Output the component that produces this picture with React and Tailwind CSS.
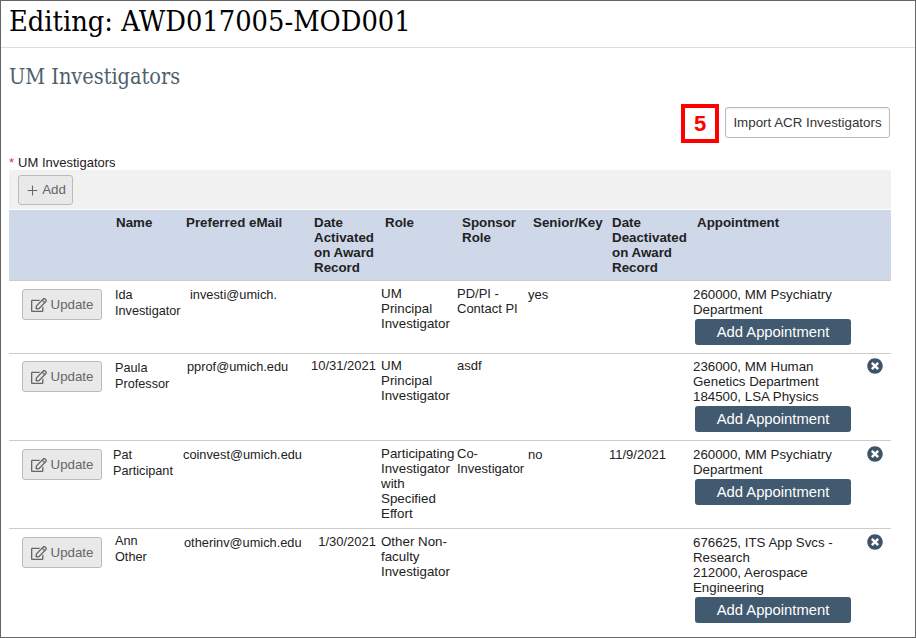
import React from "react";
import { FaRegEdit, FaTimesCircle } from "react-icons/fa";
import { Plus } from "lucide-react";

const cols = "grid grid-cols-[104px_70px_127px_71px_76px_71px_81px_84px_169px_29px]";

const rows = [
  {
    name: ["Ida", "Investigator"],
    nameClass: "pl-[2px] pt-[6px]",
    email: "investi@umich.",
    emailClass: "pl-[7px] pt-[6px]",
    role: ["UM", "Principal", "Investigator"],
    sponsor: ["PD/PI -", "Contact PI"],
    senior: "yes",
    appts: ["260000, MM Psychiatry", "Department"],
    height: "h-[73px]",
    btnTop: "pt-[8px]",
    textTop: "pt-[5px]",
    apptTop: "pt-[6px]",
    noRemove: true,
  },
  {
    name: ["Paula", "Professor"],
    nameClass: "pl-[2px] pt-[6px]",
    email: "pprof@umich.edu",
    emailClass: "pl-[4px] pt-[5px]",
    activated: "10/31/2021",
    role: ["UM", "Principal", "Investigator"],
    sponsor: ["asdf"],
    appts: ["236000, MM Human", "Genetics Department", "184500, LSA Physics"],
    height: "h-[87px]",
    btnTop: "pt-[7px]",
    textTop: "pt-[4px]",
    apptTop: "pt-[5px]",
  },
  {
    name: ["Pat", "Participant"],
    nameClass: "pt-[6px]",
    email: "coinvest@umich.edu",
    emailClass: "pt-[6px]",
    role: ["Participating", "Investigator", "with", "Specified", "Effort"],
    sponsor: ["Co-", "Investigator"],
    senior: "no",
    deactivated: "11/9/2021",
    appts: ["260000, MM Psychiatry", "Department"],
    height: "h-[88px]",
    btnTop: "pt-[8px]",
    textTop: "pt-[5px]",
    apptTop: "pt-[6px]",
  },
  {
    name: ["Ann", "Other"],
    nameClass: "pl-[2px] pt-[4px]",
    email: "otherinv@umich.edu",
    emailClass: "pl-[1px] pt-[6px]",
    activated: "1/30/2021",
    role: ["Other Non-", "faculty", "Investigator"],
    sponsor: [],
    appts: ["676625, ITS App Svcs -", "Research", "212000, Aerospace", "Engineering"],
    height: "h-[109px]",
    btnTop: "pt-[8px]",
    textTop: "pt-[5px]",
    apptTop: "pt-[6px]",
  },
];

const Lines = ({ items }) => items.map((line) => <div key={line}>{line}</div>);

const Row = ({ row }) => (
  <div className={`${cols} ${row.height} border-b border-[#ccc] last:border-b-0 text-[13px] leading-[15px] text-[#222]`}>
    <div className={`pl-[13px] ${row.btnTop}`}>
      <button className="flex h-[31px] w-[80px] items-center justify-center gap-[4px] rounded-[3px] border border-[#bbb] bg-[#e9e9e9] text-[13.33px] text-[#666]">
        <FaRegEdit className="h-[16px] w-[16px]" />
        Update
      </button>
    </div>
    <div className={`${row.nameClass} text-[12.7px] leading-[16px]`}>
      <Lines items={row.name} />
    </div>
    <div className={`${row.emailClass} whitespace-nowrap text-[12.8px]`}>{row.email}</div>
    <div className={`${row.textTop} pr-[5px] text-right`}>{row.activated}</div>
    <div className={`${row.textTop} text-[13.33px]`}>
      <Lines items={row.role} />
    </div>
    <div className={row.textTop}>
      <Lines items={row.sponsor} />
    </div>
    <div className="pt-[6px]">{row.senior}</div>
    <div className="pt-[6px]">{row.deactivated}</div>
    <div className={`${row.apptTop} text-[13.3px]`}>
      <Lines items={row.appts} />
      <button className="mt-[2px] ml-[2px] h-[26px] w-[156px] rounded-[3px] bg-[#415a6f] text-[14.8px] text-white">
        Add Appointment
      </button>
    </div>
    <div className={row.textTop}>
      {!row.noRemove && <FaTimesCircle className="ml-[5px] h-[16px] w-[16px] text-[#3f5366]" />}
    </div>
  </div>
);

const App = () => {
  return (
    <div className="h-[638px] w-[916px] overflow-hidden border border-[#666] bg-white font-['Liberation_Sans',Arial,sans-serif]">
      <div className="h-[47px] border-b border-[#ddd] pl-[8px]">
        <h1 className="font-['DejaVu_Serif',serif] font-stretch-condensed text-[28.7px] leading-[41px] text-black">Editing: AWD017005-MOD001</h1>
      </div>

      <div className="px-[8px]">
        <h2 className="mt-[15px] font-['DejaVu_Serif',serif] font-stretch-condensed text-[21.5px] leading-[28px] text-[#4f5f6c]">UM Investigators</h2>

        <div className="mt-[13px] flex items-start justify-end gap-[6px] pr-[17px]">
          <div className="flex h-[39px] w-[38px] items-center justify-center border-4 border-[#f00] text-[22px] font-bold text-[#f00]">5</div>
          <button className="mt-[3px] h-[31px] w-[165px] rounded-[3px] border border-[#bbb] bg-white text-[13.33px] text-[#333] shadow-[inset_0_1px_2px_#eee]">
            Import ACR Investigators
          </button>
        </div>

        <div className="mt-[12px] h-[15px] text-[13px] leading-[15px] text-[#222]">
          <span className="mr-[4px] text-[#d33]">*</span>UM Investigators
        </div>

        <div className="mr-[24px] w-[882px]">
          <div className="flex h-[39px] items-start bg-[#f1f1f1] pl-[9px] pt-[5px]">
            <button className="flex h-[30px] w-[55px] items-center justify-center gap-[2px] rounded-[3px] border border-[#bbb] bg-[#e9e9e9] text-[13.33px] text-[#666]">
              <Plus className="h-[15px] w-[15px]" strokeWidth={1.75} />
              Add
            </button>
          </div>
          <div className={`${cols} mt-[1px] h-[71px] border-b border-b-[#ccc] bg-[#ced8e9] pt-[5px] text-[13.33px] leading-[15px] font-bold text-[#222]`}>
            <div />
            <div className="pl-[3px]">Name</div>
            <div className="pl-[3px]">Preferred eMail</div>
            <div className="pl-[4px]">Date Activated on Award Record</div>
            <div className="pl-[4px]">Role</div>
            <div className="pl-[5px]">Sponsor Role</div>
            <div className="pl-[5px]">Senior/Key</div>
            <div className="pl-[3px]">Date Deactivated on Award Record</div>
            <div className="pl-[4px]">Appointment</div>
            <div />
          </div>
          {rows.map((row) => (
            <Row key={row.email} row={row} />
          ))}
        </div>
      </div>
    </div>
  );
};

export default App;
